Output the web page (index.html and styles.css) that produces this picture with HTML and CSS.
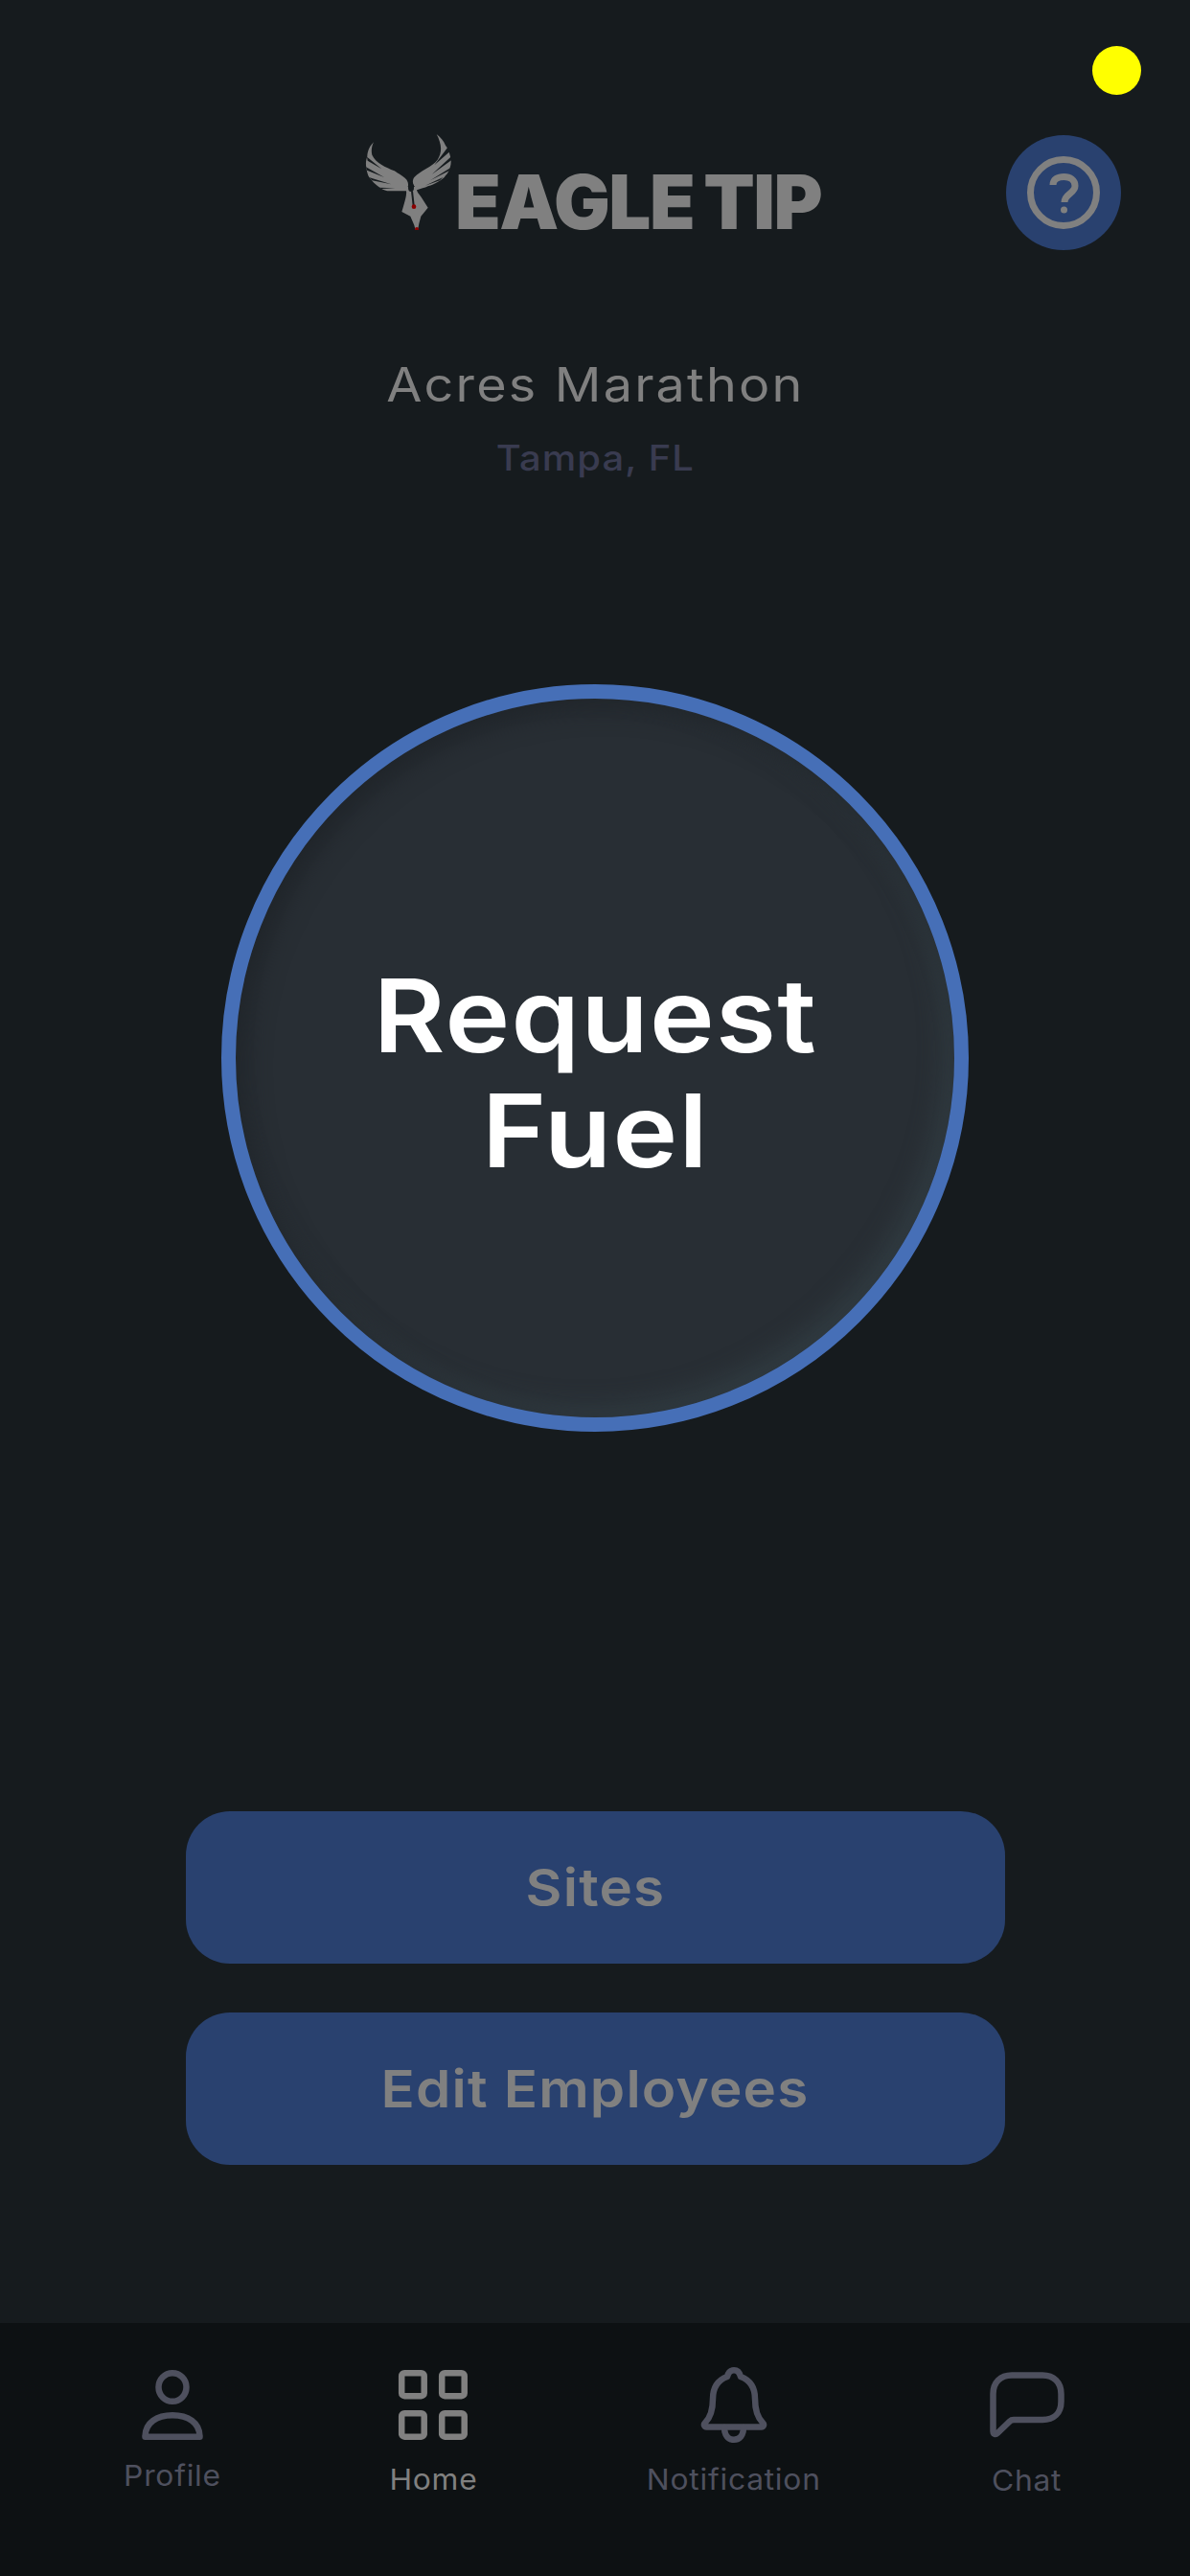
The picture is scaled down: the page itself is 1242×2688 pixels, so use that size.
FILE: index.html
```html
<!DOCTYPE html>
<html lang="en">
<head>
<meta charset="utf-8">
<title>Eagle Tip</title>
<link rel="stylesheet" href="styles.css">
</head>
<body>
<div class="page">
  <span class="status-dot"></span>
  <header class="header">
    <div class="logo">
      <svg class="logo-mark" viewBox="380 140 95 100" aria-hidden="true">
        <g transform="translate(375 135) scale(.33333)">
          <path class="logo-fill" d="M45 40C30 55 25 72 25 85C20 98 20 110 22 120C24 132 26 142 31 150C38 160 50 172 65 183C75 190 85 193 95 193L147 193C149 205 142 228 133 258L160 272L172 300L176 316L183 316L187 295L193 272L215 245L194 212C186 202 181 196 180 190C192 186 205 183 215 178C226 174 236 171 245 165C258 158 266 152 270 145C278 136 282 128 284 120C288 108 288 96 285 85C282 72 278 60 270 50C264 36 254 24 242 15C256 42 262 68 245 95C228 118 192 128 172 150C165 160 167 172 174 180L152 180C156 168 150 155 135 146C122 138 116 134 110 130C82 118 52 106 40 80C36 66 40 50 45 40Z"/>
          <ellipse class="logo-cut" cx="162" cy="182" rx="9" ry="13"/>
          <path class="logo-line" d="M165 193L170 238"/>
          <path class="logo-wedge" d="M24 86L26 98L70 124ZM21 118L24 128L78 150ZM30 150L40 160L100 172ZM62 182L70 186L112 184ZM278 55L283 70L235 112ZM288 85L288 97L228 140ZM286 120L281 130L222 160ZM262 150L252 160L206 176Z"/>
          <circle class="logo-red" cx="171" cy="242" r="7"/>
          <circle class="logo-red" cx="180" cy="312" r="6"/>
        </g>
      </svg>
      <span class="logo-word">EAGLE TIP</span>
    </div>
    <button class="help" aria-label="Help">
      <svg class="help-icon" viewBox="0 0 76 76">
        <circle cx="38" cy="38" r="34.5"/>
        <path d="M27 30C27 24 32 21.5 38.5 21.5C45 21.5 50 25 50 31C50 39 39 39 39 48"/>
        <circle class="help-dot" cx="38.5" cy="56" r="3.5"/>
      </svg>
    </button>
  </header>

  <section class="site">
    <h1 class="site-name">Acres Marathon</h1>
    <p class="site-place">Tampa, FL</p>
  </section>

  <button class="request"><span class="request-text">Request<br>Fuel</span></button>

  <div class="actions">
    <button class="action"><span class="action-text">Sites</span></button>
    <button class="action"><span class="action-text">Edit Employees</span></button>
  </div>

  <nav class="nav">
    <a class="nav-item">
      <svg class="nav-icon" viewBox="0 0 80 80">
        <ellipse cx="40" cy="21" rx="14.5" ry="14.8"/>
        <path d="M11.5 72.7H68.5C68.5 58 56 50.3 40 50.3C24 50.3 11.5 58 11.5 72.7Z"/>
      </svg>
      <span class="nav-label label-high">Profile</span>
    </a>
    <a class="nav-item is-active">
      <svg class="nav-icon" viewBox="0 0 80 80">
        <rect x="7.2" y="6.2" width="23.5" height="24" rx="3"/>
        <rect x="49.2" y="6.2" width="23.5" height="24" rx="3"/>
        <rect x="7.2" y="48.2" width="23.5" height="24.5" rx="3"/>
        <rect x="49.2" y="48.2" width="23.5" height="24.5" rx="3"/>
      </svg>
      <span class="nav-label">Home</span>
    </a>
    <a class="nav-item">
      <svg class="nav-icon" viewBox="0 0 80 80">
        <path d="M33 10C34 6 36.5 3.3 40 3.3C43.5 3.3 46 6 47 10C55 13 62 20 62 33C62 45 64 52 70 58C72 60 71 62.5 68.5 62.5H11.5C9 62.5 8 60 10 58C16 52 18 45 18 33C18 20 25 13 33 10Z"/>
        <path d="M30 63C30 71 34 75.7 40 75.7C46 75.7 50 71 50 63"/>
      </svg>
      <span class="nav-label">Notification</span>
    </a>
    <a class="nav-item">
      <svg class="nav-icon" viewBox="0 0 80 80">
        <path d="M4.5 28C4.5 16 12 8.5 24 8.5H56C68 8.5 75.5 16 75.5 28V36C75.5 48 68 55 56 55H26C24.5 55 23 55.5 22 56.5L9 69C7 71 4.5 70 4.5 67Z"/>
      </svg>
      <span class="nav-label label-low">Chat</span>
    </a>
  </nav>
</div>
</body>
</html>
```
FILE: styles.css
```css
* { box-sizing: border-box; }
html, body { margin: 0; padding: 0; }
body { background: #161b1e; font-family: Inter, "Noto Sans", sans-serif; }
button { border: 0; padding: 0; font: inherit; }

.page {
  position: relative;
  width: 1242px;
  height: 2688px;
  overflow: hidden;
  display: flex;
  flex-direction: column;
  align-items: center;
  background: #161b1e;
}

.status-dot {
  position: absolute;
  left: 1140px;
  top: 48px;
  width: 51px;
  height: 51px;
  border-radius: 50%;
  background: #ffff00;
}

.header {
  width: 100%;
  height: 261px;
  padding: 140px 72px 0 380px;
  display: flex;
  justify-content: space-between;
  align-items: flex-start;
}
.logo { height: 100px; display: flex; align-items: flex-end; }
.logo-mark { width: 95px; height: 100px; display: block; flex: none; }
.logo-fill { fill: #808080; }
.logo-cut { fill: #161b1e; }
.logo-line { fill: none; stroke: #161b1e; stroke-width: 6; }
.logo-wedge { fill: #161b1e; }
.logo-red { fill: #8b0000; }
.logo-word {
  display: block;
  font-weight: 900;
  font-size: 78px;
  line-height: 58px;
  letter-spacing: -1.5px;
  word-spacing: -4px;
  white-space: nowrap;
  color: #808080;
}
.help {
  width: 120px;
  height: 120px;
  margin-top: 1px;
  border-radius: 50%;
  background: #29416f;
  display: flex;
  align-items: center;
  justify-content: center;
}
.help-icon { width: 76px; height: 76px; fill: none; stroke: #808080; stroke-width: 7; }
.help-icon .help-dot { fill: #808080; stroke: none; }

.site { text-align: center; margin-top: 111px; }
.site-name {
  margin: 0;
  font-size: 49px;
  font-weight: 400;
  line-height: 60px;
  letter-spacing: 2px;
  color: #808080;
  transform: scaleX(1.1);
}
.site-place {
  margin: 24px 0 0;
  font-size: 37px;
  font-weight: 500;
  line-height: 44px;
  letter-spacing: 1px;
  color: #393b50;
  transform: scaleX(1.08);
}

.request {
  width: 780px;
  height: 780px;
  margin-top: 214px;
  padding-top: 32px;
  flex: none;
  border-radius: 50%;
  border: 15px solid #466fb7;
  background: #282e34;
  box-shadow: inset 10px 10px 24px #20252a, inset -10px -10px 24px #323d43;
  color: #fff;
  font-size: 106px;
  font-weight: 600;
  line-height: 120px;
  letter-spacing: 1.3px;
  text-align: center;
}
.request-text { display: inline-block; transform: scaleX(1.08); }

.actions {
  margin-top: 396px;
  display: flex;
  flex-direction: column;
  gap: 51px;
}
.action {
  width: 855px;
  height: 159px;
  border-radius: 46px;
  background: #29416f;
  color: #808080;
  font-size: 54px;
  font-weight: 600;
  letter-spacing: 1.1px;
  text-align: center;
}
.action-text { display: inline-block; transform: scaleX(1.08); }

.nav {
  position: absolute;
  left: 0;
  right: 0;
  bottom: 0;
  height: 264px;
  padding-top: 46px;
  display: grid;
  grid-template-columns: 360px 184px 444px 168px;
  background: #0d1113;
  color: #4e505e;
}
.nav-item { display: flex; flex-direction: column; align-items: center; }
.is-active { color: #808080; }
.nav-icon {
  width: 80px;
  height: 80px;
  flex: none;
  fill: none;
  stroke: currentColor;
  stroke-width: 6.5;
  stroke-linejoin: round;
  stroke-linecap: round;
}
.nav-label {
  margin-top: 17px;
  font-size: 30px;
  line-height: 40px;
  letter-spacing: 0.7px;
  transform: scaleX(1.06);
}
.label-high { margin-top: 13px; }
.label-low { margin-top: 18px; }
```
